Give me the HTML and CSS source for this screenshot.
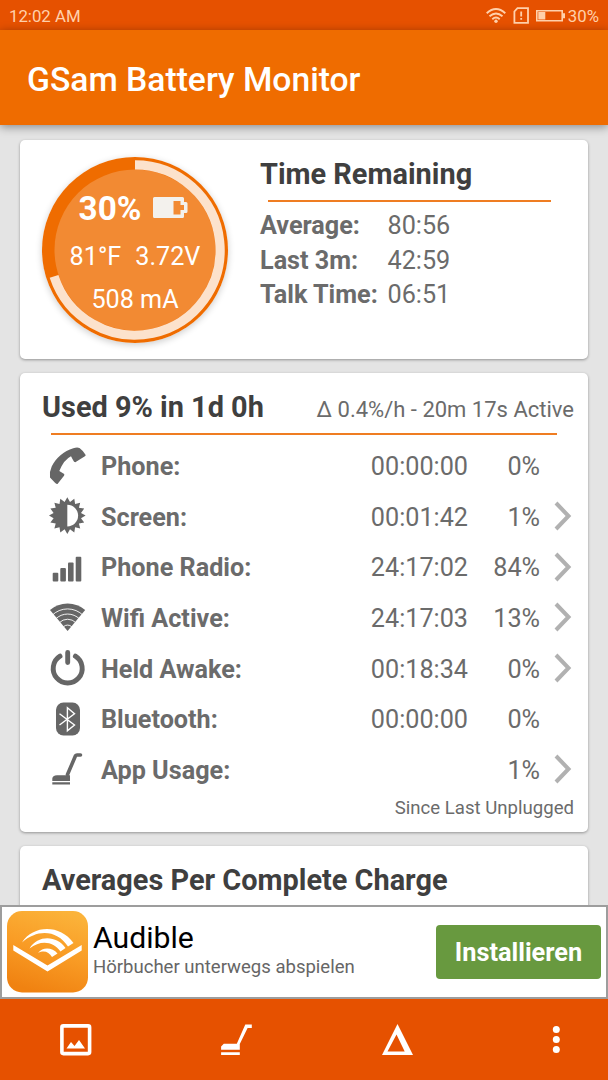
FILE: index.html
```html
<!DOCTYPE html>
<html lang="en">
<head>
<meta charset="utf-8">
<title>GSam Battery Monitor</title>
<link rel="stylesheet" href="styles.css">
</head>
<body>
<div class="screen">
  <div class="status">
    <span class="clock">12:02 AM</span>
    <svg class="status-icons" width="80" height="30" viewBox="486 0 80 30">
      <g fill="none" stroke="#ffd0ab" stroke-width="1.9">
        <path d="M486.700 13.200Q496 4.800 505.300 13.200M489.500 16.300Q496 10.500 502.500 16.300M492.300 19.200Q496 16 499.700 19.200"/>
        <path stroke-width="1.800" d="M517.500 8.100H528V22.900H514.400V11.500Z"/>
        <path stroke-width="1.600" d="M536.800 10.800H562.200V20.800H536.800Z"/>
      </g>
      <g fill="#ffd0ab"><circle cx="496" cy="21.300" r="1.700"/><path d="M520.300 11.500h1.800v5h-1.800zM520.300 18h1.800v1.800h-1.800zM538.300 12h7v7.600h-7zM563 13.300h2v5h-2z"/></g>
    </svg>
    <span class="charge">30%</span>
  </div>
  <header class="appbar"><h1>GSam Battery Monitor</h1></header>
  <main class="content">
    <section class="card summary">
      <div class="gauge">
        <svg class="ring" width="186" height="186" viewBox="-93 -93 186 186">
          <circle r="93" fill="#ef6c00"/>
          <circle r="80.500" fill="#f28a33"/>
          <path d="M0 -85.100A85.100 85.100 0 1 1 -80.940 26.300" fill="none" stroke="#fce2cc" stroke-width="9.200"/>
        </svg>
        <div class="readings">
          <div class="level"><span>30%</span>
            <svg width="35" height="21" viewBox="0 0 35 21"><path fill="#f3f1ed" fill-rule="evenodd" d="M1.500 0H29.500Q31 0 31 1.500V5H33Q34.500 5 34.500 6.500V14.500Q34.500 16 33 16H31V19.500Q31 21 29.500 21H1.500Q0 21 0 19.500V1.500Q0 0 1.500 0ZM20.500 4V17.500H27.500V13H31V8H27.500V4Z"/></svg>
          </div>
          <div class="reading"><span>81°F</span><span>3.72V</span></div>
          <div class="reading">508 mA</div>
        </div>
      </div>
      <div class="remaining">
        <h2>Time Remaining</h2>
        <div class="rule"></div>
        <dl>
          <dt>Average:</dt><dd>80:56</dd>
          <dt>Last 3m:</dt><dd>42:59</dd>
          <dt>Talk Time:</dt><dd>06:51</dd>
        </dl>
      </div>
    </section>

    <section class="card usage">
      <div class="usage-head"><h2>Used 9% in 1d 0h</h2><span>Δ 0.4%/h - 20m 17s Active</span></div>
      <div class="rule"></div>
      <div class="row">
        <svg class="icon" viewBox="0 0 40 40"><path d="M26.300 2.300Q30 1 32.500 2Q36 4.500 38.700 9Q38.500 10.200 37.500 10.500L28.300 16.300Q27 16.200 26 14L24 10.200Q17 13.500 12.300 25L17.200 28Q17.500 29 17 29.800L10.500 38Q9.500 38.200 8 36.800L3 31.500Q2.300 25.500 4.700 20.500C8.700 12.500 17 4.700 26.300 2.300Z"/></svg>
        <b>Phone:</b><span class="time">00:00:00</span><span class="pct">0%</span>
      </div>
      <div class="row">
        <svg class="icon" viewBox="-20.300 -19.600 40 40"><path d="M18.300 0L13.700 2.700 16.900 7 11.600 7.800 12.900 12.900 7.800 11.600 7 16.900 2.700 13.700 0 18.300 -2.700 13.700 -7 16.900 -7.800 11.600 -12.900 12.900 -11.600 7.800 -16.900 7 -13.700 2.700 -18.300 0 -13.700 -2.700 -16.900 -7 -11.600 -7.800 -12.900 -12.900 -7.800 -11.600 -7 -16.900 -2.700 -13.700 0 -18.300 2.700 -13.700 7 -16.900 7.800 -11.600 12.900 -12.900 11.600 -7.800 16.900 -7 13.700 -2.700Z"/><path fill="#fff" d="M0 -10.800A10.800 10.800 0 0 1 0 10.800Z"/></svg>
        <b>Screen:</b><span class="time">00:01:42</span><span class="pct">1%</span>
        <svg class="chevron" viewBox="0 0 18 30"><path d="M2 2L14.500 15 2 28"/></svg>
      </div>
      <div class="row">
        <svg class="icon" viewBox="0 0 40 40"><rect x="5.700" y="25.700" width="5.600" height="8.900" rx="1"/><rect x="13.300" y="21" width="5.600" height="13.600" rx="1"/><rect x="21" y="15.400" width="5.600" height="19.200" rx="1"/><rect x="28.700" y="9.800" width="5.600" height="24.800" rx="1"/></svg>
        <b>Phone Radio:</b><span class="time">24:17:02</span><span class="pct">84%</span>
        <svg class="chevron" viewBox="0 0 18 30"><path d="M2 2L14.500 15 2 28"/></svg>
      </div>
      <div class="row">
        <svg class="icon" viewBox="0 0 40 40"><path d="M20.600 34L3 13Q10.500 6.500 20.600 6.500T38.200 13Z"/><path fill="none" stroke="#fff" stroke-width="0.900" d="M5 18.400A22 22 0 0 1 36.200 18.400M8.600 22A17 17 0 0 1 32.600 22M12.300 25.700A11.700 11.700 0 0 1 28.900 25.700M16.400 29.800A6 6 0 0 1 24.800 29.800"/></svg>
        <b>Wifi Active:</b><span class="time">24:17:03</span><span class="pct">13%</span>
        <svg class="chevron" viewBox="0 0 18 30"><path d="M2 2L14.500 15 2 28"/></svg>
      </div>
      <div class="row">
        <svg class="icon" viewBox="0 0 40 40"><path fill="none" stroke="#666" stroke-width="4.900" stroke-linecap="round" d="M20.700 4.500V14.500M13 8.200A14.500 14.500 0 1 0 28.400 8.200"/></svg>
        <b>Held Awake:</b><span class="time">00:18:34</span><span class="pct">0%</span>
        <svg class="chevron" viewBox="0 0 18 30"><path d="M2 2L14.500 15 2 28"/></svg>
      </div>
      <div class="row">
        <svg class="icon" viewBox="0 0 40 40"><rect x="9" y="3.500" width="24" height="33" rx="7.500"/><path fill="none" stroke="#fff" stroke-width="1.400" d="M12.500 14.700L27.500 26 20.400 31.800V8.700L27.500 14.700 12.500 26"/></svg>
        <b>Bluetooth:</b><span class="time">00:00:00</span><span class="pct">0%</span>
      </div>
      <div class="row">
        <svg class="icon" viewBox="0 0 40 40"><path d="M5.300 32V29.500Q5.500 26.500 10 26.300H23V32ZM5.300 33.200H23V35.400H5.300Z"/><path fill="none" stroke="#666" stroke-width="3.600" stroke-linecap="round" stroke-linejoin="round" d="M20.500 25.500L28.500 6.800Q29 6 30 6H33.500"/></svg>
        <b>App Usage:</b><span class="time"></span><span class="pct">1%</span>
        <svg class="chevron" viewBox="0 0 18 30"><path d="M2 2L14.500 15 2 28"/></svg>
      </div>
      <div class="since">Since Last Unplugged</div>
    </section>

    <section class="card averages"><h2>Averages Per Complete Charge</h2></section>
  </main>

  <aside class="ad">
    <svg class="ad-logo" width="82" height="82" viewBox="0 0 82 82">
      <defs><linearGradient id="amber" x1="0.700" y1="0" x2="0.400" y2="1"><stop offset="0" stop-color="#fbb33a"/><stop offset="0.500" stop-color="#f99c25"/><stop offset="1" stop-color="#f08211"/></linearGradient></defs>
      <rect width="81" height="81.500" rx="15" fill="url(#amber)"/>
      <g fill="#fff"><path d="M6.300 34L40.500 54.500 74.700 34V39.500L40.500 60.500 6.300 39.500Z"/>
      <path d="M15 31.500C26 14 53 13 66.500 32L61 35.600C50.500 19 30.500 17.500 15 31.500Z"/><path d="M22.500 37.500C31 23.500 50 24.500 58.500 37L53.500 40.600C46.500 30.500 34 28.500 22.500 37.500Z"/><path d="M31 42C36 35.500 45.500 36.500 50.500 42.500L45 46C42 41 37 39 31 42Z"/></g>
    </svg>
    <div class="ad-text"><strong>Audible</strong><span>Hörbucher unterwegs abspielen</span></div>
    <button class="install">Installieren</button>
  </aside>

  <nav class="toolbar">
    <svg width="32" height="32" viewBox="0 0 32 32"><rect x="1.900" y="1.900" width="27.700" height="27.700" rx="1.500" fill="none" stroke="#fff" stroke-width="3.600"/><path fill="#fff" d="M6.500 24.500L11 18 14.500 22 19 16 25 24.500Z"/></svg>
    <svg width="32" height="32" viewBox="-0.800 0 32 32"><path fill="#fff" d="M24.500 0.500H31V4H26.800L19 20V25.700H0.300V22.500L3 19.800H16ZM0.300 28.200H19V31H0.300Z"/></svg>
    <svg width="32" height="32" viewBox="-1 0 32 32" overflow="visible"><path transform="translate(1 0)" fill="#fff" fill-rule="evenodd" d="M15.500 0L31 31H0ZM14.500 10.500L5.500 27.500H22.700Z"/></svg>
    <svg width="32" height="32" viewBox="0 0 32 32"><g fill="#fff"><circle cx="16.300" cy="5.400" r="3.500"/><circle cx="16.300" cy="15.500" r="3.500"/><circle cx="16.300" cy="25.600" r="3.500"/></g></svg>
  </nav>
</div>
</body>
</html>
```
FILE: styles.css
```css
* { box-sizing: border-box; }
body { margin: 0; font-family: Roboto, "Liberation Sans", sans-serif; }
h1, h2, dl, dd { margin: 0; }
svg { display: block; flex: none; }

.screen {
  width: 608px;
  height: 1080px;
  display: flex;
  flex-direction: column;
  overflow: hidden;
  background: #e4e4e4;
}

.status {
  flex: none;
  height: 30px;
  display: flex;
  align-items: center;
  padding: 2px 9px 0 9px;
  background: #e65100;
  color: #ffd0ab;
  font-size: 16.800px;
}
.status-icons { margin: -2px 2px 0 auto; }

.appbar {
  flex: none;
  height: 95px;
  display: flex;
  align-items: center;
  padding: 3px 0 0 27px;
  background: #ef6c00;
  box-shadow: 0 2px 9px rgba(0, 0, 0, 0.4);
  z-index: 1;
}
.appbar h1 { color: #fff; font-size: 33.650px; font-weight: 500; }

.content {
  flex: 1;
  min-height: 0;
  overflow: hidden;
  display: flex;
  flex-direction: column;
  gap: 14px;
  padding: 15px 20px 0;
}
.card {
  flex: none;
  background: #fff;
  border-radius: 5px;
  box-shadow: 0 1px 3px rgba(0, 0, 0, 0.36);
}
h2 { color: #3f3f3f; font-size: 28.900px; font-weight: 700; line-height: 34px; white-space: nowrap; }
.rule { height: 2px; background: #ef7d22; }

.summary { height: 219px; display: flex; padding: 17px 0 0 22px; }
.gauge { display: grid; width: 186px; height: 186px; border-radius: 50%; box-shadow: 0 2px 7px rgba(0, 0, 0, 0.2); }
.ring, .readings { grid-area: 1 / 1; }
.readings { padding-top: 30px; color: #fff; display: flex; flex-direction: column; align-items: center; }
.level { display: flex; align-items: center; gap: 12px; height: 43px; margin-right: 3px; font-size: 33.300px; font-weight: 700; }
.level svg { margin-top: -2px; }
.reading { display: flex; gap: 14px; height: 43px; line-height: 53px; font-size: 25.200px; }
.remaining { margin-left: 32px; width: 300px; }
.remaining .rule { margin: 9px 10px 0 8px; width: 283px; }
dl { display: grid; grid-template-columns: 127.500px 1fr; margin-top: 7px; font-size: 25.200px; line-height: 34.500px; color: #6b6b6b; }
dt { font-weight: 700; white-space: nowrap; }

.usage { height: 459px; color: #6b6b6b; }
.usage-head { display: flex; justify-content: space-between; padding: 17px 14px 0 22px; height: 60px; }
.usage-head span { font-size: 22px; line-height: 39px; }
.usage .rule { margin: 0 31px; }
.usage .rule + .row { margin-top: 5.200px; }
.row {
  height: 50.670px;
  display: grid;
  grid-template-columns: 40px 220px 167px 72px 18px;
  align-items: center;
  padding-left: 27px;
  font-size: 25.200px;
}
.row b, .time, .pct { padding-top: 2px; }
.row b { padding-left: 14px; }
.time, .pct { text-align: right; padding-right: 6px; }
.icon { width: 40px; height: 40px; fill: #666; }
.chevron { width: 18px; height: 30px; margin-left: 8px; fill: none; stroke: #b1b1b1; stroke-width: 4; }
.since { text-align: right; padding-right: 14px; font-size: 18.600px; line-height: 26px; }

.averages { height: 120px; padding: 17px 22px; }

.ad {
  flex: none;
  height: 94px;
  display: flex;
  align-items: center;
  padding: 0 5px;
  background: #fff;
  border: 2px solid #9d9d9d;
}
.ad-text { margin: -3px 0 0 4px; white-space: nowrap; }
.ad-text strong { display: block; font-weight: 400; font-size: 30.200px; line-height: 34px; color: #000; }
.ad-text span { display: block; font-size: 18.550px; line-height: 25px; color: #666; }
.install {
  margin-left: auto;
  width: 165px;
  height: 54px;
  padding: 0;
  border: 0;
  border-radius: 4px;
  background: #68993f;
  color: #fff;
  font: 700 25.300px Roboto, sans-serif;
}

.toolbar {
  flex: none;
  height: 81px;
  display: flex;
  justify-content: space-between;
  align-items: center;
  padding: 0 36px 0 60px;
  background: #e65100;
}
```
